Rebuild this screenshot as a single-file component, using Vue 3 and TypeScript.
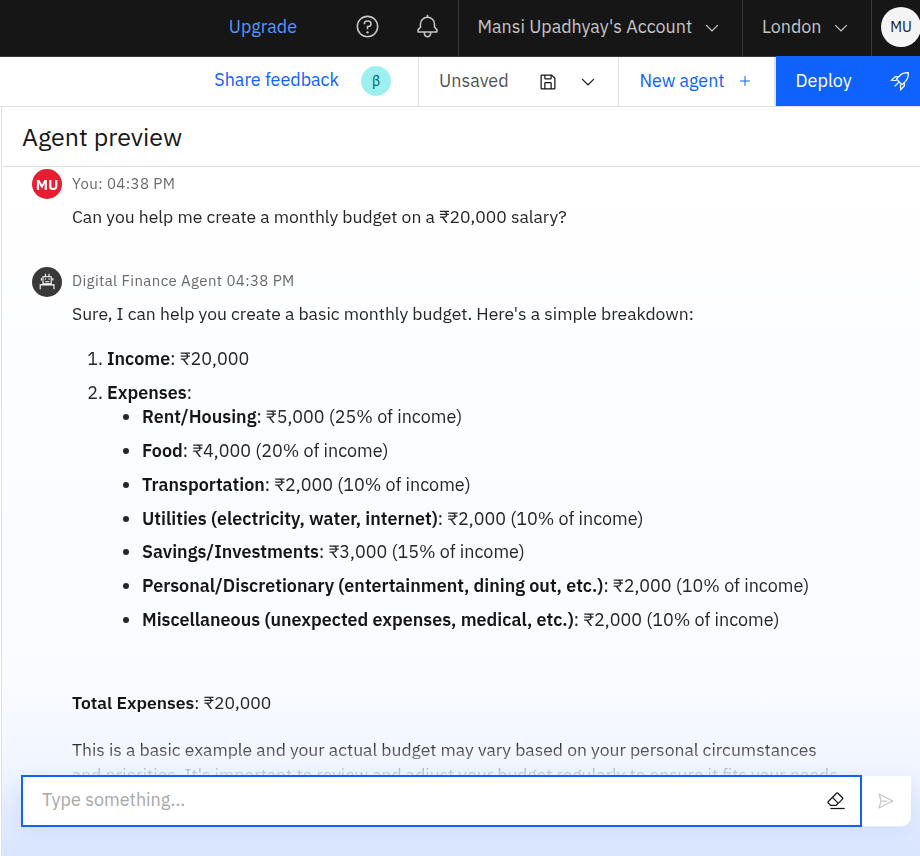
<script setup lang="ts">
interface Expense {
  label: string
  amount: string
  share: string
}

const expenses: Expense[] = [
  { label: 'Rent/Housing', amount: '₹5,000', share: '25%' },
  { label: 'Food', amount: '₹4,000', share: '20%' },
  { label: 'Transportation', amount: '₹2,000', share: '10%' },
  { label: 'Utilities (electricity, water, internet)', amount: '₹2,000', share: '10%' },
  { label: 'Savings/Investments', amount: '₹3,000', share: '15%' },
  { label: 'Personal/Discretionary (entertainment, dining out, etc.)', amount: '₹2,000', share: '10%' },
  { label: 'Miscellaneous (unexpected expenses, medical, etc.)', amount: '₹2,000', share: '10%' },
]
</script>

<template>
  <div class="page">
    <header class="topbar">
      <a class="upgrade">Upgrade</a>
      <svg class="help" viewBox="0 0 32 32"><path d="M16,2A14,14,0,1,0,30,16,14,14,0,0,0,16,2Zm0,26A12,12,0,1,1,28,16,12,12,0,0,1,16,28Z" /><circle cx="16" cy="23.5" r="1.5" /><path d="M17,8H15.5A4.49,4.49,0,0,0,11,12.5V13h2v-.5A2.5,2.5,0,0,1,15.5,10H17a2.5,2.5,0,0,1,0,5H15v4.5h2V17a4.5,4.5,0,0,0,0-9Z" /></svg>
      <svg class="bell" viewBox="0 0 32 32"><path d="M28.7071,19.293,26,16.5859V13a10.0136,10.0136,0,0,0-9-9.9492V1H15V3.0508A10.0136,10.0136,0,0,0,6,13v3.5859L3.2929,19.293A1,1,0,0,0,3,20v3a1,1,0,0,0,1,1h7v.7768a5.152,5.152,0,0,0,4.5,5.1987A5.0057,5.0057,0,0,0,21,25V24h7a1,1,0,0,0,1-1V20A1,1,0,0,0,28.7071,19.293ZM19,25a3,3,0,0,1-6,0V24h6Zm8-3H5V20.4141L7.707,17.707A1,1,0,0,0,8,17V13a8,8,0,0,1,16,0v4a1,1,0,0,0,.293.707L27,20.4141Z" /></svg>
      <div class="menu account">
        <span>Mansi Upadhyay's Account</span>
        <svg class="chevron" viewBox="0 0 16 16"><path d="M8 11L3 6 3.7 5.3 8 9.6 12.3 5.3 13 6z" /></svg>
      </div>
      <div class="menu region">
        <span>London</span>
        <svg class="chevron" viewBox="0 0 16 16"><path d="M8 11L3 6 3.7 5.3 8 9.6 12.3 5.3 13 6z" /></svg>
      </div>
      <div class="menu profile"><span class="profile-badge">MU</span></div>
    </header>

    <div class="toolbar">
      <div class="feedback">
        <a>Share feedback</a>
        <span class="beta">β</span>
      </div>
      <div class="save">
        <span>Unsaved</span>
        <svg class="save-icon" viewBox="0 0 32 32"><path d="M27.71,9.29l-5-5A1,1,0,0,0,22,4H6A2,2,0,0,0,4,6V26a2,2,0,0,0,2,2H26a2,2,0,0,0,2-2V10A1,1,0,0,0,27.71,9.29ZM12,6h8v4H12Zm8,20H12V18h8Zm2,0V18a2,2,0,0,0-2-2H12a2,2,0,0,0-2,2v8H6V6h4v4a2,2,0,0,0,2,2h8a2,2,0,0,0,2-2V6.41l4,4V26Z" /></svg>
        <svg class="chevron" viewBox="0 0 16 16"><path d="M8 11L3 6 3.7 5.3 8 9.6 12.3 5.3 13 6z" /></svg>
      </div>
      <div class="new-agent">
        <span>New agent</span>
        <svg class="plus" viewBox="0 0 10 10"><path d="M4.5 0h1v4.5H10v1H5.5V10h-1V5.5H0v-1h4.5z" /></svg>
      </div>
      <button class="deploy">
        <span>Deploy</span>
        <svg class="rocket" viewBox="0 0 20 20"><path d="M18.3 1.7C14 1.6 11.6 2.7 9.7 4.7L6.5 8.2 12 13.6l3.4-3.2c2-2 3-4.4 2.9-8.7ZM8.7 5.8 5.4 5.6 1.5 9.3l5 .2M14.2 11.5l.2 3.2-3.7 4-.3-5.2M9.2 10.9 4.6 15.4" /></svg>
      </button>
    </div>

    <section class="preview">
      <h1>Agent preview</h1>
      <div class="chat">
        <div class="messages">
          <article class="message">
            <span class="avatar user">MU</span>
            <div class="body">
              <div class="meta">You: 04:38 PM</div>
              <p>Can you help me create a monthly budget on a ₹20,000 salary?</p>
            </div>
          </article>
          <article class="message reply">
            <span class="avatar bot">
              <svg viewBox="0 0 20 20"><path d="M6 4.7h8.2v7.2H6zM8.5 1.7v3M12 1.7v3M4.4 6v2.4M15.8 6v2.4M8.2 9.8h4M3.2 17.3v-4.4h13.8v4.4M8.5 6.4v1.3M12 6.4v1.3" /></svg>
            </span>
            <div class="body">
              <div class="meta">Digital Finance Agent 04:38 PM</div>
              <p>Sure, I can help you create a basic monthly budget. Here's a simple breakdown:</p>
              <ol>
                <li><strong>Income</strong>: ₹20,000</li>
                <li>
                  <strong>Expenses</strong>:
                  <ul>
                    <li v-for="e in expenses" :key="e.label"><strong>{{ e.label }}</strong>: {{ e.amount }} ({{ e.share }} of income)</li>
                  </ul>
                </li>
              </ol>
              <p class="total"><strong>Total Expenses</strong>: ₹20,000</p>
              <p class="note">This is a basic example and your actual budget may vary based on your personal circumstances and priorities. It's important to review and adjust your budget regularly to ensure it fits your needs.</p>
            </div>
          </article>
        </div>
        <div class="composer">
          <div class="field">
            <span class="placeholder">Type something...</span>
            <svg class="eraser" viewBox="0 0 32 32"><path d="M7,27H30v2H7Z" /><path d="M27.38,10.51,19.45,2.59a2,2,0,0,0-2.83,0l-14,14a2,2,0,0,0,0,2.83L7.13,24h9.59L27.38,13.34A2,2,0,0,0,27.38,10.51ZM15.89,22H8L4,18l6.31-6.31,7.93,7.92Zm3.76-3.76-7.92-7.93L18,4,26,11.93Z" /></svg>
          </div>
          <div class="send">
            <svg viewBox="0 0 32 32"><path d="M27.45,15.11l-22-11a1,1,0,0,0-1.08.12,1,1,0,0,0-.33,1L7,16,4,26.74A1,1,0,0,0,5,28a1,1,0,0,0,.45-.11l22-11a1,1,0,0,0,0-1.78Zm-20.9,10L8.76,17H18V15H8.76L6.55,6.89,24.76,16Z" /></svg>
          </div>
        </div>
      </div>
    </section>
  </div>
</template>

<style>
body {
  overflow: hidden;
}
</style>

<style scoped>
* {
  box-sizing: border-box;
}
svg {
  display: block;
  flex: none;
  fill: currentColor;
}
.page {
  width: 920px;
  height: 856px;
  display: flex;
  flex-direction: column;
  overflow: hidden;
  background: #fff;
  color: #161616;
  font-family: "IBM Plex Sans", Roboto, "Noto Sans", sans-serif;
  font-size: 18px;
  line-height: 24px;
}
.topbar {
  flex: none;
  height: 57px;
  display: flex;
  align-items: center;
  justify-content: flex-end;
  background: #161616;
  border-bottom: 1px solid #393939;
  color: #c6c6c6;
  font-size: 17.9px;
}
.upgrade {
  color: #5596ff;
  margin: 0 58px 2px 0;
}
.help {
  width: 25px;
  height: 25px;
  margin: 0 35px 3px 0;
}
.bell {
  width: 25px;
  height: 25px;
  margin: 0 18px 3px 0;
}
.menu {
  height: 56px;
  display: flex;
  align-items: center;
  flex: none;
  padding-bottom: 2px;
  border-left: 1px solid #393939;
}
.account {
  width: 284px;
  padding-left: 18.5px;
}
.region {
  width: 129px;
  padding-left: 19px;
}
.chevron {
  width: 20px;
  height: 20px;
}
.menu .chevron {
  margin: 2px 0 0 9.5px;
}
.profile {
  width: 49px;
  padding-left: 9px;
}
.profile-badge {
  flex: none;
  width: 40px;
  height: 40px;
  border-radius: 50%;
  background: #f4f4f4;
  color: #161616;
  font-size: 14.5px;
  line-height: 40px;
  text-align: center;
}
.toolbar {
  flex: none;
  height: 50px;
  display: flex;
  align-items: stretch;
  justify-content: flex-end;
  border-bottom: 1px solid #e0e0e0;
}
.toolbar > div {
  display: flex;
  align-items: center;
}
.feedback {
  color: #0f62fe;
  padding: 0 27px 1px 0;
  gap: 22px;
  font-size: 17.9px;
}
.feedback a {
  margin-bottom: 2px;
}
.beta {
  width: 30px;
  height: 30px;
  border-radius: 50%;
  background: #9ef0f0;
  color: #005d5d;
  font-size: 14px;
  line-height: 31px;
  text-align: center;
}
.save {
  width: 200px;
  padding-left: 20px;
  border-left: 1px solid #e0e0e0;
}
.save > span {
  color: #525252;
  margin-bottom: 2px;
}
.save-icon {
  width: 20px;
  height: 20px;
  margin: 1px 20px 0 29px;
}
.new-agent {
  width: 158px;
  padding: 0 0 2px 20.5px;
  border-left: 1px solid #e0e0e0;
  border-right: 2px solid #e0e0e0;
  color: #0f62fe;
  font-size: 17.8px;
}
.plus {
  width: 10px;
  height: 10px;
  margin-left: 15.5px;
}
.deploy {
  width: 144px;
  height: 50px;
  margin-top: -1px;
  padding: 0 10px 0 19.5px;
  display: flex;
  align-items: center;
  justify-content: space-between;
  border: 0;
  background: #0f62fe;
  color: #fff;
  font: inherit;
}
.rocket {
  width: 20px;
  height: 20px;
  fill: none;
  stroke: currentColor;
  stroke-width: 1.25;
}
.preview {
  flex: 1;
  min-height: 0;
  display: flex;
  flex-direction: column;
}
h1 {
  flex: none;
  height: 60px;
  margin: 0 0 0 1px;
  padding: 0 0 0 20px;
  border-left: 1px solid #e0e0e0;
  border-bottom: 1px solid #e0e0e0;
  font-size: 25px;
  font-weight: 400;
  line-height: 59px;
}
.chat {
  flex: 1;
  min-height: 0;
  margin-left: 1px;
  display: flex;
  flex-direction: column;
  border-left: 1px solid #e0e0e0;
  background: linear-gradient(#fff 0, #fcfdff 30%, #f9fbff 75%, #f1f6ff 87%, #e0eafe 95%, #dae6fe 100%);
}
.messages {
  height: 608px;
  flex: none;
  overflow: hidden;
  padding: 2px 72px 0 30px;
  mask-image: linear-gradient(#000 576px, rgba(0, 0, 0, 0.28) 602px, rgba(0, 0, 0, 0.15) 608px);
}
.message {
  display: flex;
  gap: 10px;
}
.avatar {
  flex: none;
  width: 30px;
  height: 30px;
  border-radius: 50%;
  color: #fff;
}
.user {
  background: #e71d32;
  font-size: 15px;
  font-weight: 700;
  line-height: 31px;
  text-align: center;
}
.bot {
  display: grid;
  place-items: center;
  margin-top: 1px;
  background: #393939;
}
.bot svg {
  width: 20px;
  height: 20px;
  fill: none;
  stroke: #fff;
  stroke-width: 1.1;
}
.body {
  flex: 1;
  color: #262626;
  line-height: 24.75px;
}
.meta {
  margin-top: 4px;
  font-size: 15px;
  line-height: 21px;
  letter-spacing: 0.39px;
  color: #6a6a6a;
}
p {
  margin: 11px 0 0;
  font-size: 17.5px;
}
.reply {
  margin-top: 36px;
}
strong {
  font-weight: 600;
  color: #161616;
}
ol {
  margin: 20.4px 0 0;
  padding-left: 35px;
  font-size: 17.93px;
}
ul {
  margin: 0;
  padding-left: 35px;
  list-style-type: disc;
}
li {
  margin-bottom: 9px;
}
.total {
  margin-top: 58.6px;
}
.note {
  margin-top: 22px;
}
.composer {
  flex: none;
  display: flex;
  align-items: center;
  margin: 0 9px 0 19px;
  border-radius: 0 0 9px 9px;
  box-shadow: 0 5px 20px rgba(80, 120, 220, 0.1);
}
.field {
  flex: 1;
  height: 52px;
  display: flex;
  align-items: center;
  justify-content: space-between;
  padding: 0 14px 0 19px;
  border: 2px solid #0f62fe;
  background: #fff;
}
.placeholder {
  color: #a8a8a8;
  padding-bottom: 2px;
}
.eraser {
  width: 20px;
  height: 20px;
}
.send {
  width: 49px;
  height: 50px;
  display: grid;
  place-items: center;
  padding-right: 2px;
  background: #fff;
  border-radius: 0 0 9px 0;
  color: #c6c6c6;
}
.send svg {
  width: 20px;
  height: 20px;
}
</style>
